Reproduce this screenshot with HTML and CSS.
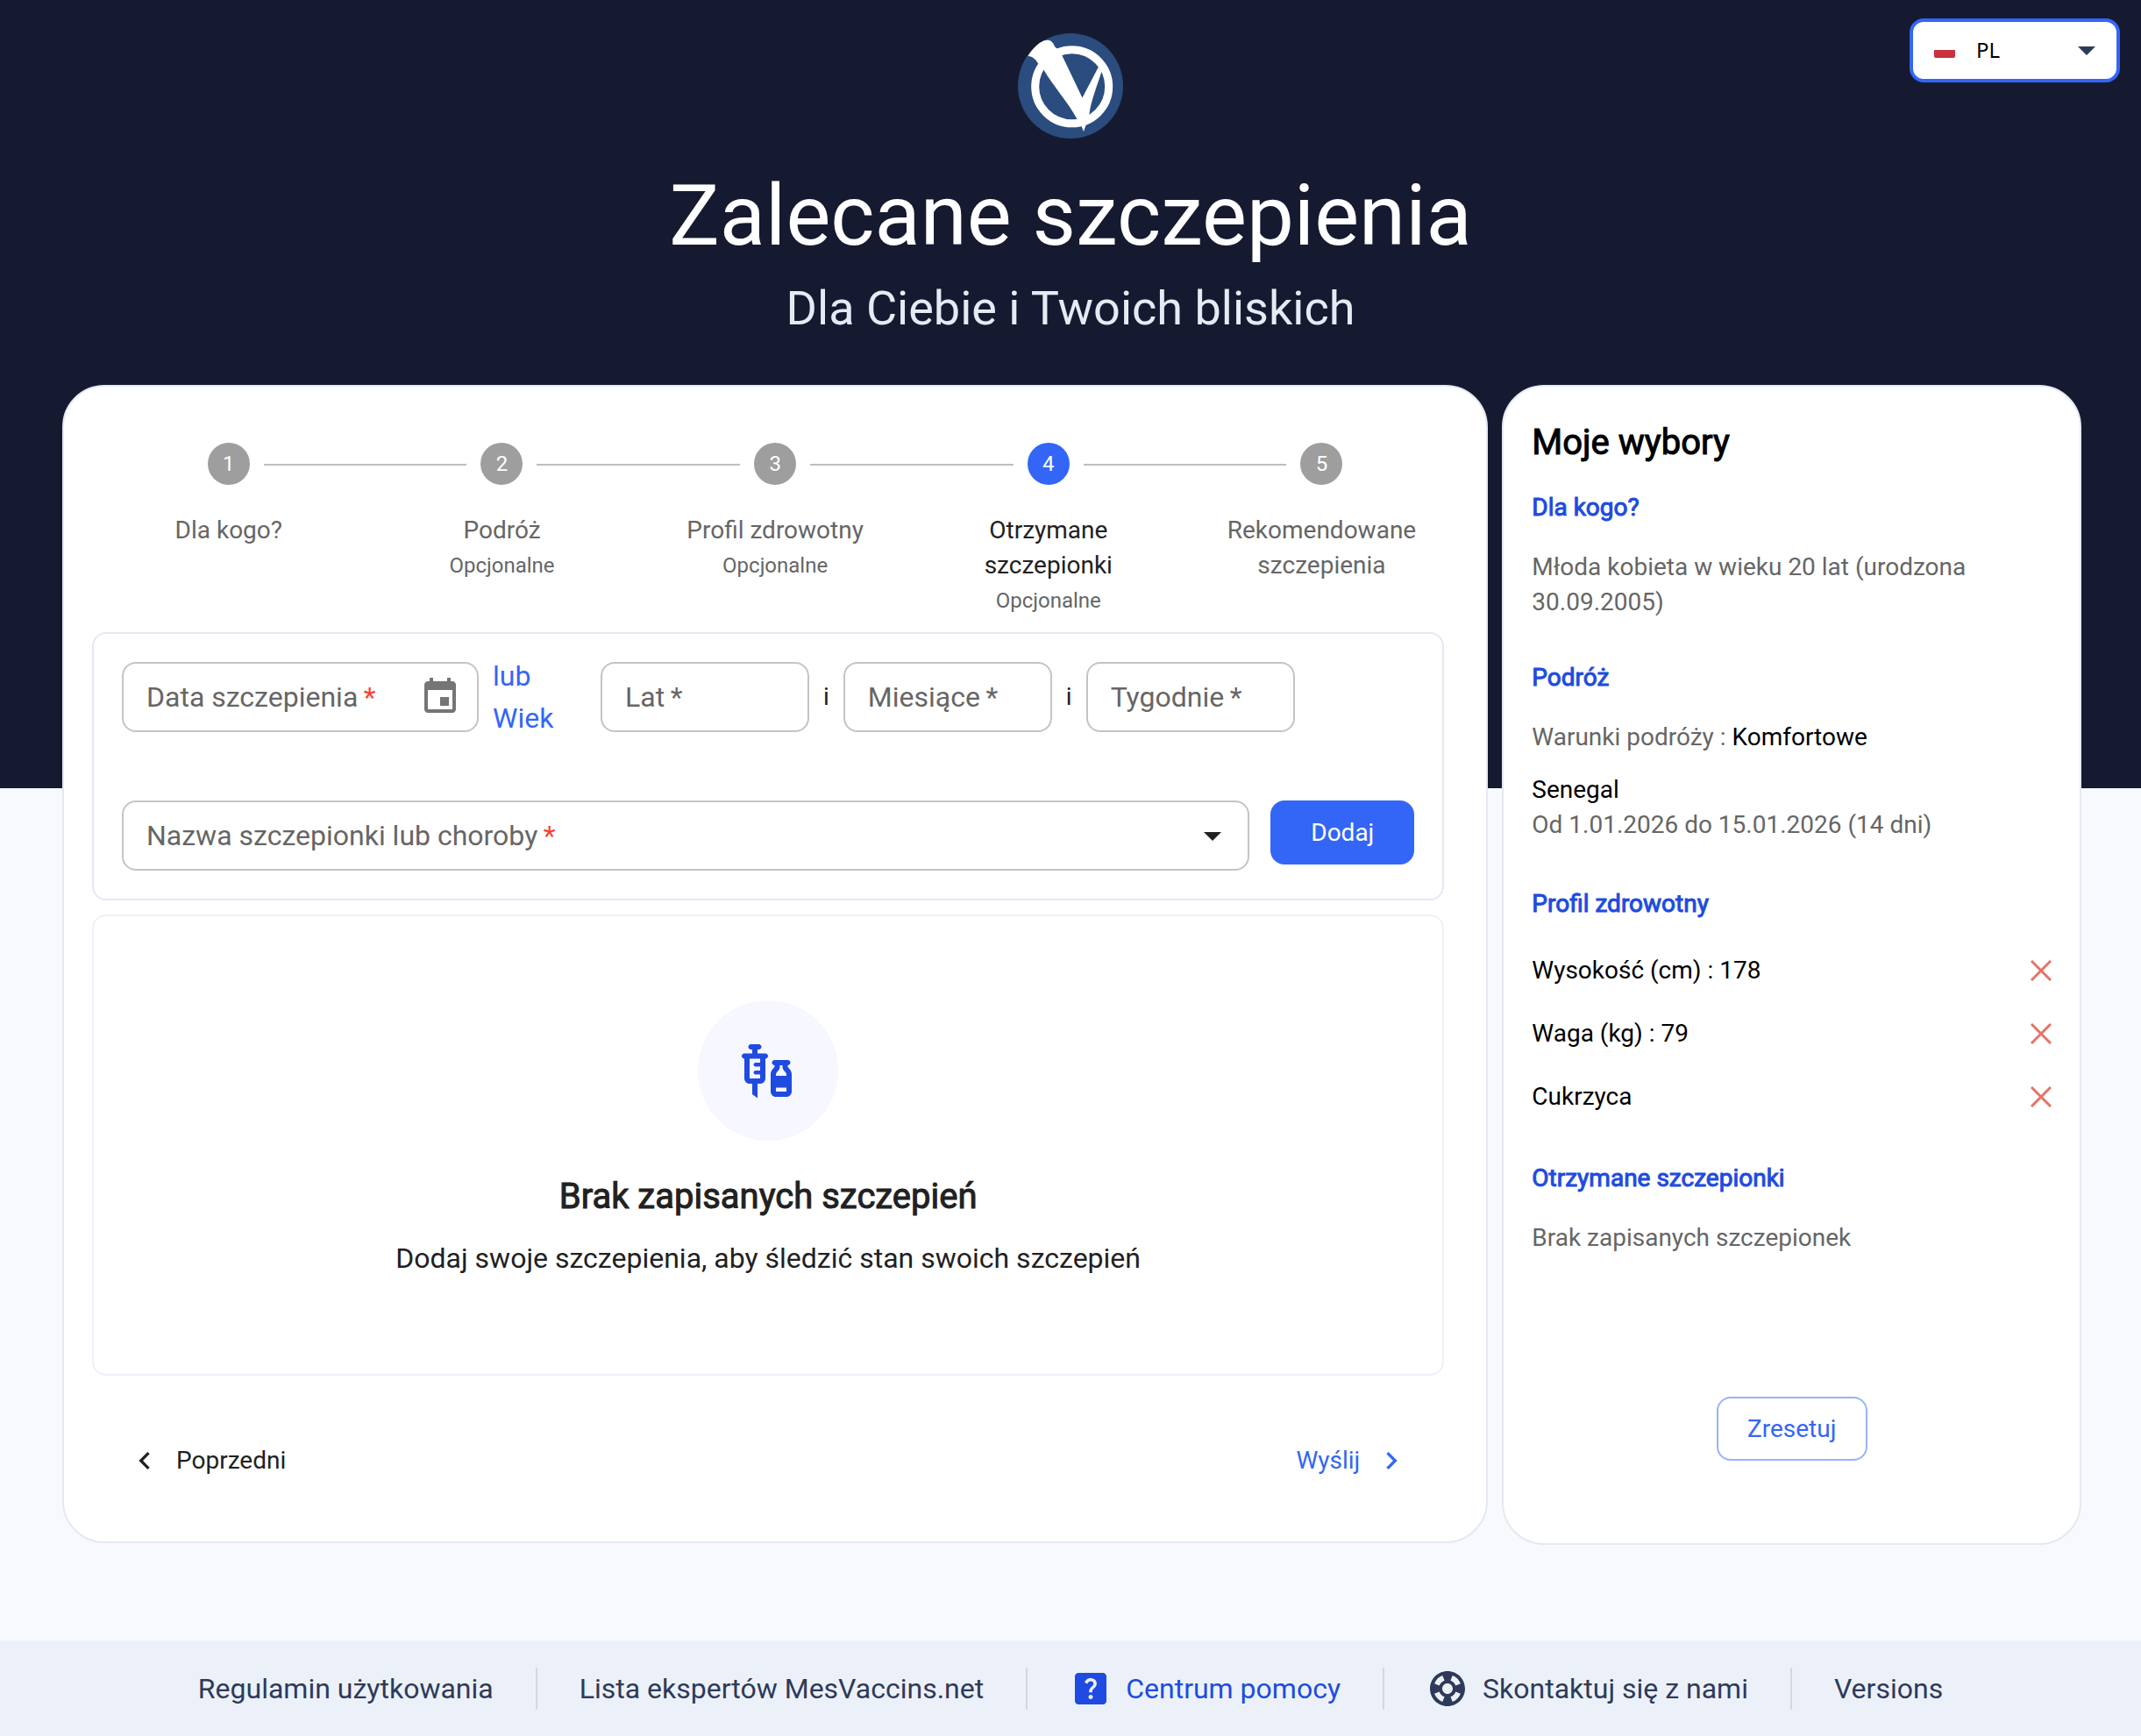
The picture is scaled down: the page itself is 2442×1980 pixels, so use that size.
FILE: index.html
```html
<!DOCTYPE html>
<html lang="pl">
<head>
<meta charset="utf-8">
<meta name="viewport" content="width=device-width, initial-scale=1">
<title>Zalecane szczepienia</title>
<link rel="stylesheet" href="styles.css">
</head>
<body>
<div class="page">
  <header class="header">
    <div class="brand">
      <svg class="logo" viewBox="0 0 120 120" aria-hidden="true">
        <circle cx="60" cy="60" r="60" fill="#2b4c7e"/>
        <circle cx="61.7" cy="60.8" r="42" fill="none" stroke="#fff" stroke-width="9"/>
        <path fill="#fff" d="M11.500 26C16 18 23 11 30 8.200C36 6.500 40 9 42 15C43.500 17 45 17 46.500 18C49 20 49.500 22 50.500 25.500L73.500 73.500L91.800 38.500L95.500 43.500C91 58 83 78 81.500 92L77.500 105L75 112L72.500 106L67.500 98C57 78 40 60 29 41C27 37 25 38 23 34.500C20 29 16 26 11.500 26Z"/>
      </svg>
      <h1 class="title">Zalecane szczepienia</h1>
      <p class="subtitle">Dla Ciebie i Twoich bliskich</p>
    </div>
    <div class="lang">
      <svg class="lang-flag" viewBox="0 0 24 18" aria-hidden="true"><path fill="#fff" d="M0 0h24v9H0z"/><path fill="#c8313e" d="M0 9h24v7a2 2 0 0 1-2 2H2a2 2 0 0 1-2-2z"/></svg>
      <select class="lang-select" aria-label="Język"><option>PL</option></select>
      <svg class="icon lang-arrow" viewBox="0 0 24 24" aria-hidden="true"><path d="M7 10l5 5 5-5z"/></svg>
    </div>
  </header>

  <main class="main">
    <section class="card wizard">
      <ol class="stepper">
        <li class="step"><span class="dot">1</span><span class="label">Dla kogo?</span></li>
        <li class="step"><span class="dot">2</span><span class="label">Podróż</span><span class="hint">Opcjonalne</span></li>
        <li class="step"><span class="dot">3</span><span class="label">Profil zdrowotny</span><span class="hint">Opcjonalne</span></li>
        <li class="step active" aria-current="step"><span class="dot">4</span><span class="label">Otrzymane szczepionki</span><span class="hint">Opcjonalne</span></li>
        <li class="step"><span class="dot">5</span><span class="label">Rekomendowane szczepienia</span></li>
      </ol>

      <form class="panel form">
        <div class="row dates">
          <div class="field date">
            <label for="date">Data szczepienia&thinsp;<span class="req">*</span></label>
            <input id="date" type="text">
            <svg class="icon muted" viewBox="0 0 24 24" aria-hidden="true"><path d="M17 12h-5v5h5v-5zM16 1v2H8V1H6v2H5c-1.110 0-1.990.9-1.990 2L3 19c0 1.100.89 2 2 2h14c1.100 0 2-.9 2-2V5c0-1.100-.9-2-2-2h-1V1h-2zm3 18H5V8h14v11z"/></svg>
          </div>
          <span class="or">lub Wiek</span>
          <div class="field age"><label for="years">Lat&thinsp;*</label><input id="years" type="text"></div>
          <span class="and">i</span>
          <div class="field age"><label for="months">Miesiące&thinsp;*</label><input id="months" type="text"></div>
          <span class="and">i</span>
          <div class="field age"><label for="weeks">Tygodnie&thinsp;*</label><input id="weeks" type="text"></div>
        </div>
        <div class="row vaccine">
          <div class="field name">
            <label for="vaccine">Nazwa szczepionki lub choroby&thinsp;<span class="req">*</span></label>
            <select id="vaccine"><option value=""></option></select>
            <svg class="icon" viewBox="0 0 24 24" aria-hidden="true"><path d="M7 10l5 5 5-5z"/></svg>
          </div>
          <button class="btn primary" type="button">Dodaj</button>
        </div>
      </form>

      <div class="panel empty">
        <span class="badge">
          <svg class="badge-icon" viewBox="0 0 24 24" aria-hidden="true"><path d="M11,5.5H8V4h0.5c0.55,0,1-0.45,1-1c0-0.55-0.45-1-1-1h-3c-0.55,0-1,0.45-1,1c0,0.55,0.45,1,1,1H6v1.5H3c-0.55,0-1,0.45-1,1c0,0.55,0.45,1,1,1V15c0,1.1,0.9,2,2,2h1v4l2,1.5V17h1c1.1,0,2-0.9,2-2V7.5c0.55,0,1-0.45,1-1C12,5.95,11.55,5.5,11,5.5z M9,9H7.25C6.84,9,6.5,9.34,6.5,9.75c0,0.41,0.34,0.75,0.75,0.75H9V12H7.25c-0.41,0-0.75,0.34-0.75,0.75c0,0.41,0.34,0.75,0.75,0.75H9L9,15H5V7.5h4V9z M19.5,10.5V10c0.55,0,1-0.45,1-1c0-0.55-0.45-1-1-1h-5c-0.55,0-1,0.45-1,1c0,0.55,0.45,1,1,1v0.5c0,0.5-1.5,1.16-1.5,3V20c0,1.1,0.9,2,2,2h4c1.1,0,2-0.9,2-2v-6.5C21,11.66,19.5,11,19.5,10.5z M16.5,10.5V10h1v0.5c0,1.6,1.5,2,1.5,3V14h-4c0-0.21,0-0.39,0-0.5C15,12.5,16.5,12.1,16.5,10.5z M19,20h-4v-1.5h4V20z"/></svg>
        </span>
        <h2 class="heading">Brak zapisanych szczepień</h2>
        <p class="lead">Dodaj swoje szczepienia, aby śledzić stan swoich szczepień</p>
      </div>

      <nav class="pager" aria-label="Kroki">
        <button class="link" type="button"><svg class="chevron" viewBox="0 0 24 24" aria-hidden="true"><path d="M15.410 16.590 10.830 12l4.580-4.590L14 6l-6 6 6 6z"/></svg>Poprzedni</button>
        <button class="link next" type="button">Wyślij<svg class="chevron" viewBox="0 0 24 24" aria-hidden="true"><path d="M8.590 16.590 13.170 12 8.590 7.410 10 6l6 6-6 6z"/></svg></button>
      </nav>
    </section>

    <aside class="card summary">
      <h2 class="heading">Moje wybory</h2>
      <section class="group">
        <h3 class="topic">Dla kogo?</h3>
        <p class="note">Młoda kobieta w wieku 20 lat (urodzona 30.09.2005)</p>
      </section>
      <section class="group">
        <h3 class="topic">Podróż</h3>
        <p class="note">Warunki podróży : <span class="strong">Komfortowe</span></p>
        <p class="trip"><span class="strong">Senegal</span><br>Od 1.01.2026 do 15.01.2026 (14 dni)</p>
      </section>
      <section class="group">
        <h3 class="topic">Profil zdrowotny</h3>
        <ul class="items">
          <li class="item">Wysokość (cm) : 178<button class="remove" type="button" aria-label="Usuń wysokość"><svg viewBox="0 0 24 24" aria-hidden="true"><path d="M1 1l22 22M23 1L1 23"/></svg></button></li>
          <li class="item">Waga (kg) : 79<button class="remove" type="button" aria-label="Usuń wagę"><svg viewBox="0 0 24 24" aria-hidden="true"><path d="M1 1l22 22M23 1L1 23"/></svg></button></li>
          <li class="item">Cukrzyca<button class="remove" type="button" aria-label="Usuń cukrzycę"><svg viewBox="0 0 24 24" aria-hidden="true"><path d="M1 1l22 22M23 1L1 23"/></svg></button></li>
        </ul>
      </section>
      <section class="group">
        <h3 class="topic">Otrzymane szczepionki</h3>
        <p class="note">Brak zapisanych szczepionek</p>
      </section>
      <button class="btn outline" type="button">Zresetuj</button>
    </aside>
  </main>

  <footer class="footer">
    <a class="foot-link" href="#">Regulamin użytkowania</a>
    <a class="foot-link" href="#">Lista ekspertów MesVaccins.net</a>
    <a class="foot-link help" href="#"><svg class="icon" viewBox="0 0 24 24" aria-hidden="true"><path d="M19 3H5c-1.100 0-2 .9-2 2v14c0 1.100.9 2 2 2h14c1.100 0 2-.9 2-2V5c0-1.100-.9-2-2-2zm-6.990 15c-.7 0-1.260-.56-1.260-1.260 0-.71.56-1.250 1.260-1.250.71 0 1.250.54 1.250 1.250-.01.69-.54 1.260-1.250 1.260zm3.010-7.400c-.76 1.110-1.480 1.460-1.870 2.170-.16.29-.22.48-.22 1.410h-1.820c0-.49-.08-1.290.31-1.980.49-.87 1.420-1.390 1.960-2.160.57-.81.25-2.330-1.370-2.330-1.060 0-1.580.8-1.800 1.480l-1.650-.7C9.010 7.150 10.220 6 11.990 6c1.480 0 2.490.67 3.010 1.520.44.72.7 2.070.02 3.080z"/></svg>Centrum pomocy</a>
    <a class="foot-link" href="#"><svg class="icon" viewBox="0 0 24 24" aria-hidden="true"><path d="M12 2C6.480 2 2 6.480 2 12s4.480 10 10 10 10-4.480 10-10S17.520 2 12 2zm7.460 7.120-2.780 1.150c-.51-1.360-1.580-2.440-2.950-2.940l1.150-2.780c2.100.8 3.770 2.470 4.580 4.570zM12 15c-1.660 0-3-1.340-3-3s1.340-3 3-3 3 1.340 3 3-1.340 3-3 3zM9.130 4.540l1.170 2.780c-1.380.5-2.470 1.590-2.980 2.970L4.540 9.130c.81-2.110 2.480-3.780 4.590-4.590zM4.540 14.870l2.780-1.150c.51 1.380 1.590 2.460 2.970 2.960l-1.170 2.780c-2.100-.81-3.770-2.480-4.580-4.590zm10.340 4.590-1.150-2.780c1.370-.51 2.450-1.590 2.950-2.970l2.780 1.170c-.81 2.100-2.480 3.770-4.580 4.580z"/></svg>Skontaktuj się z nami</a>
    <a class="foot-link" href="#">Versions</a>
  </footer>
</div>
</body>
</html>
```
FILE: styles.css
```css
:root {
  --navy: #161a30;
  --blue: #3366f7;
  --deep-blue: #204be0;
  --ink: #212121;
  --grey: #666;
  --line: #e3e9f3;
}

* { box-sizing: border-box; }

body {
  margin: 0;
  font: 28px/40px Roboto, "Liberation Sans", sans-serif;
  color: var(--ink);
}

h1, h2, h3, p, ol, ul { margin: 0; padding: 0; font-weight: 400; }
ol, ul { list-style: none; }
button, input, select { font: inherit; color: inherit; }

.page {
  min-height: 100vh;
  display: flex;
  flex-direction: column;
  background: linear-gradient(var(--navy) 899px, #f7f9fd 899px);
}

.icon { width: 48px; height: 48px; flex: none; fill: currentColor; }
.muted { color: #757575; }

/* Header */
.header { display: grid; }
.header > * { grid-area: 1 / 1; }
.brand {
  display: flex;
  flex-direction: column;
  align-items: center;
  padding: 38px 0 55px;
  color: #fff;
  text-align: center;
}
.logo { width: 120px; height: 120px; }
.title { margin-top: 32px; font-size: 96px; line-height: 112px; }
.subtitle { margin-top: 18px; font-size: 54px; line-height: 64px; color: #e5eaf4; }

.lang {
  justify-self: end;
  align-self: start;
  display: flex;
  align-items: center;
  width: 240px;
  height: 73px;
  margin: 21px 24px 0 0;
  padding: 0 10px 2px 24px;
  border: 4px solid var(--blue);
  border-radius: 16px;
  background: #fff;
}
.lang-flag { width: 24px; height: 18px; flex: none; }
.lang-select {
  flex: 1;
  min-width: 0;
  margin-left: 24px;
  padding: 0;
  border: 0;
  appearance: none;
  background: none;
  font-family: "Noto Sans", sans-serif;
  font-size: 24px;
  color: #000;
}
.lang-arrow { color: #2e3a59; }

/* Two cards */
.main {
  display: grid;
  grid-template-columns: 32fr 13fr;
  gap: 16px;
  align-items: start;
  padding: 0 68px 0 71px;
}
.card {
  border: 2px solid var(--line);
  border-radius: 48px;
  background: #fff;
}
.wizard { padding: 64px 32px 72px; }

.stepper { display: grid; grid-template-columns: repeat(5, 1fr); min-height: 216px; }
.step {
  position: relative;
  display: flex;
  flex-direction: column;
  align-items: center;
  padding: 0 40px;
  text-align: center;
  color: var(--grey);
}
.step + .step::before {
  content: "";
  position: absolute;
  top: 24px;
  left: calc(-50% + 40px);
  right: calc(50% + 40px);
  height: 2px;
  background: #bdbdbd;
}
.dot {
  width: 48px;
  height: 48px;
  margin-bottom: 32px;
  border-radius: 50%;
  background: #9e9e9e;
  color: #fff;
  font-size: 24px;
  line-height: 48px;
}
.hint { font-size: 24px; color: var(--grey); }
.active { color: var(--ink); }
.active .dot { background: var(--blue); }

.panel { margin-right: 16px; border: 2px solid var(--line); border-radius: 16px; }
.form { padding: 24px 32px 32px; }
.row { display: flex; }
.dates { align-items: center; gap: 16px; height: 96px; }
.field {
  display: flex;
  align-items: center;
  height: 80px;
  padding: 0 16px 0 26px;
  border: 2px solid #c4c4c4;
  border-radius: 16px;
  font-size: 32px;
}
.field label { flex: none; color: var(--grey); }
.field .req { color: #f44336; }
.field input, .field select {
  flex: 1;
  min-width: 0;
  width: 0;
  height: 100%;
  padding: 0;
  border: 0;
  outline: 0;
  appearance: none;
  background: none;
}
.date { width: 407px; padding-right: 18px; }
.or { width: 107px; font-size: 32px; line-height: 48px; color: var(--blue); }
.age { width: 238px; }
.vaccine { align-items: flex-start; gap: 24px; margin-top: 70px; }
.name { flex: 1; }

.btn {
  min-height: 73px;
  border: 2px solid var(--blue);
  border-radius: 16px;
  cursor: pointer;
}
.primary { min-width: 164px; background: var(--blue); color: #fff; }
.outline { min-width: 172px; border-color: #99b2fb; background: none; color: var(--blue); }

.empty {
  display: flex;
  flex-direction: column;
  align-items: center;
  margin-top: 16px;
  padding: 96px 32px 108px;
  border-color: #ecf1f9;
  text-align: center;
}
.badge {
  display: flex;
  align-items: center;
  justify-content: center;
  width: 160px;
  height: 160px;
  margin-bottom: 36px;
  border-radius: 50%;
  background: #f6f7ff;
}
.badge-icon { width: 72px; height: 72px; fill: var(--deep-blue); }
.heading { font-size: 40px; line-height: 56px; -webkit-text-stroke: 1px; }
.lead { margin-top: 18px; font-size: 32px; line-height: 48px; }

.pager { display: flex; justify-content: space-between; margin: 77px 16px 0 0; padding: 0 40px; }
.link {
  display: flex;
  align-items: center;
  gap: 16px;
  padding: 0;
  border: 0;
  background: none;
  cursor: pointer;
}
.next { color: var(--blue); }
.chevron { width: 40px; height: 40px; fill: currentColor; }

/* Summary */
.summary {
  display: flex;
  flex-direction: column;
  padding: 36px 32px 94px;
  color: #000;
}
.group { margin-top: 46px; }
.heading + .group { margin-top: 26px; }
.topic { font-size: 28px; color: var(--deep-blue); -webkit-text-stroke: 1px; }
.note { margin-top: 28px; color: var(--grey); }
.trip { margin-top: 20px; padding-bottom: 4px; color: var(--grey); }
.strong { color: #000; }
.items { margin: 20px 0 -9px; }
.item { display: flex; align-items: center; justify-content: space-between; height: 72px; }
.remove { display: flex; padding: 0; border: 0; background: none; cursor: pointer; }
.remove svg { width: 24px; height: 24px; fill: none; stroke: #e57368; stroke-width: 3; }
.outline { align-self: center; margin-top: 161px; }

/* Footer */
.footer {
  display: flex;
  align-items: center;
  justify-content: center;
  min-height: 109px;
  margin-top: auto;
  background: #ecf1f9;
}
.foot-link {
  display: flex;
  align-items: center;
  gap: 16px;
  height: 48px;
  padding: 0 48px;
  font-size: 32px;
  color: #2e3a59;
  text-decoration: none;
}
.foot-link + .foot-link { border-left: 2px solid #d3d7df; }
.help { color: var(--deep-blue); }
```
